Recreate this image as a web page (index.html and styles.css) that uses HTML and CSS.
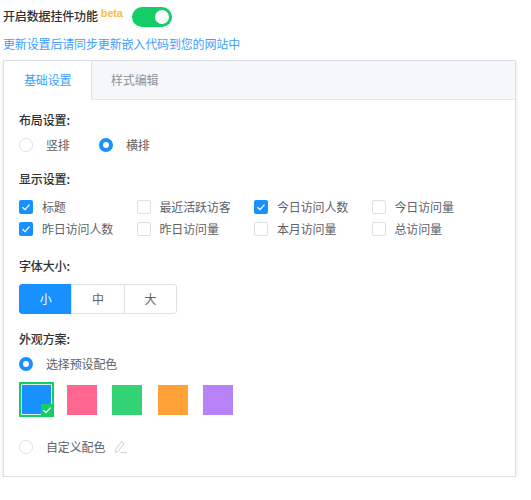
FILE: index.html

```html
<!DOCTYPE html>
<html>
	<head>
		<meta charset="utf-8" />
		<title>数据挂件</title>
		<link rel="stylesheet" href="styles.css">
	</head>
	<body>
		<div class="switch-line">
			<span class="switch-title">开启数据挂件功能</span>
			<span class="beta">beta</span>
			<span class="switch"><span class="switch-knob"></span></span>
		</div>
		<div class="tip">更新设置后请同步更新嵌入代码到您的网站中</div>

		<div class="card">
			<div class="tabs">
				<div class="tab active">基础设置</div>
				<div class="tab">样式编辑</div>
			</div>
			<div class="card-body">
				<div class="title">布局设置:</div>
				<div class="radio-row">
					<span class="radio-item"><span class="radio"></span>竖排</span>
					<span class="radio-item"><span class="radio on"></span>横排</span>
				</div>

				<div class="title title-display">显示设置:</div>
				<div class="check-grid">
					<span class="check-item"><span class="check on"><svg viewBox="0 0 14 14"><path d="M3.5 7.2 6 9.6 10.5 4.6" /></svg></span>标题</span>
					<span class="check-item"><span class="check"></span>最近活跃访客</span>
					<span class="check-item"><span class="check on"><svg viewBox="0 0 14 14"><path d="M3.5 7.2 6 9.6 10.5 4.6" /></svg></span>今日访问人数</span>
					<span class="check-item"><span class="check"></span>今日访问量</span>
					<span class="check-item"><span class="check on"><svg viewBox="0 0 14 14"><path d="M3.5 7.2 6 9.6 10.5 4.6" /></svg></span>昨日访问人数</span>
					<span class="check-item"><span class="check"></span>昨日访问量</span>
					<span class="check-item"><span class="check"></span>本月访问量</span>
					<span class="check-item"><span class="check"></span>总访问量</span>
				</div>

				<div class="title title-font">字体大小:</div>
				<div class="size-group">
					<span class="size-btn active">小</span>
					<span class="size-btn">中</span>
					<span class="size-btn">大</span>
				</div>

				<div class="title title-theme">外观方案:</div>
				<div class="radio-row preset-row">
					<span class="radio-item"><span class="radio on"></span>选择预设配色</span>
				</div>
				<div class="swatches">
					<span class="swatch selected blue">
						<span class="corner"><svg viewBox="0 0 12 12"><path d="M2.5 6.2 5 8.6 9.5 3.6" /></svg></span>
					</span>
					<span class="swatch pink"></span>
					<span class="swatch green"></span>
					<span class="swatch orange"></span>
					<span class="swatch purple"></span>
				</div>
				<div class="radio-row custom-row">
					<span class="radio-item"><span class="radio"></span>自定义配色</span>
					<svg class="pen" viewBox="0 0 14 14"><path d="M1.5 9.5 7.5 1.5 10 3.5 4 11.5 1.3 12.3Z" /><path d="M6.5 12.7H13" /></svg>
				</div>
			</div>
		</div>
	</body>
</html>
```

FILE: styles.css

```css
* {
  box-sizing: border-box;
}

body {
  margin: 0;
  padding: 0 3px;
  background: #fff;
  color: #606266;
  font-family: "Noto Sans CJK SC", "Noto Sans", sans-serif;
  font-size: 12px;
  line-height: 18px;
  letter-spacing: -0.15px;
}

.switch-line {
  display: flex;
  align-items: center;
  height: 34px;
}
.switch-title {
  margin-top: -2px;
  color: #303133;
  font-weight: 500;
}
.beta {
  margin: -9px 0 0 3px;
  color: #f9bd3f;
  font-family: "Liberation Sans", sans-serif;
  font-size: 11px;
  font-weight: 700;
}
.switch {
  display: block;
  width: 40px;
  height: 20px;
  margin-left: 9px;
  padding: 3px 3px 3px 23px;
  border-radius: 10px;
  background: #13ce66;
}
.switch-knob {
  display: block;
  width: 14px;
  height: 14px;
  border-radius: 50%;
  background: #fff;
}

.tip {
  margin-top: 1px;
  color: #409eff;
  height: 25px;
}

.card {
  width: 513px;
  height: 417px;
  border: 1px solid #dcdfe6;
  background: #fff;
  box-shadow: 0 2px 4px rgba(0, 0, 0, 0.12);
}
.tabs {
  display: flex;
  height: 39px;
  border-bottom: 1px solid #e4e7ed;
  background: #f5f7fa;
}
.tab {
  width: 88px;
  margin-bottom: -1px;
  padding-left: 20px;
  border-right: 1px solid #dcdfe6;
  border-bottom: 1px solid #e4e7ed;
  color: #909399;
  line-height: 38px;
}
.tab:last-child {
  padding-left: 19px;
  border-right: 0;
}
.tab.active {
  border-bottom-color: #fff;
  background: #fff;
  color: #409eff;
}

.card-body {
  padding: 11px 15px 0;
}
.title {
  color: #303133;
  font-weight: 500;
  height: 18px;
}
.title-display {
  margin-top: 16px;
}
.title-font {
  margin-top: 19px;
}
.title-theme {
  margin-top: 16px;
}

.radio-row {
  display: flex;
  align-items: center;
  height: 18px;
  margin-top: 7px;
}
.radio-item {
  display: flex;
  align-items: center;
  width: 80px;
  white-space: nowrap;
}
.radio {
  width: 14px;
  height: 14px;
  margin-right: 13px;
  border: 1px solid #dcdfe6;
  border-radius: 50%;
  background: #fff;
}
.radio.on {
  border: 4.5px solid #1890ff;
}

.check-grid {
  display: grid;
  grid-template-columns: repeat(4, 117.5px);
  row-gap: 4px;
  margin-top: 10px;
}
.check-item {
  display: flex;
  align-items: center;
  height: 18px;
  white-space: nowrap;
}
.check {
  width: 14px;
  height: 14px;
  margin-right: 9px;
  border: 1px solid #dcdfe6;
  border-radius: 2px;
  background: #fff;
}
.check.on {
  border: 0;
  background: #1890ff;
}
.check svg {
  display: block;
  fill: none;
  stroke: #fff;
  stroke-width: 1.3;
}

.size-group {
  display: flex;
  width: 158px;
  margin-top: 9px;
}
.size-btn {
  flex: 1;
  height: 30px;
  margin-left: -1px;
  border: 1px solid #dcdfe6;
  text-align: center;
  line-height: 28px;
}
.size-btn:first-child {
  margin-left: 0;
  border-color: #1890ff;
  border-radius: 3px 0 0 3px;
}
.size-btn:last-child {
  border-radius: 0 3px 3px 0;
}
.size-btn.active {
  background: #1890ff;
  color: #fff;
}

.preset-row .radio-item {
  width: auto;
}

.swatches {
  display: flex;
  align-items: center;
  gap: 15.33px;
  margin-top: 9px;
}
.swatch {
  display: block;
  width: 30px;
  height: 30px;
}
.swatch.selected {
  position: relative;
  width: 35px;
  height: 35px;
  margin-right: -2.33px;
  border: 2px solid #13ce66;
  box-shadow: inset 0 0 0 1px #d6f5e4;
}
.blue {
  background: #1890ff;
}
.pink {
  background: #ff6690;
}
.green {
  background: #33d375;
}
.orange {
  background: #ffa136;
}
.purple {
  background: #b782f5;
}
.corner {
  position: absolute;
  right: -1px;
  bottom: -1px;
  width: 12px;
  height: 12px;
  background: #13ce66;
}
.corner svg {
  display: block;
  fill: none;
  stroke: #fff;
  stroke-width: 1.2;
}

.custom-row {
  margin-top: 21px;
}
.custom-row .radio-item {
  width: auto;
}
.pen {
  width: 14px;
  height: 14px;
  margin-left: 9px;
  fill: none;
  stroke: #cfcfcf;
  stroke-width: 1;
}
```
